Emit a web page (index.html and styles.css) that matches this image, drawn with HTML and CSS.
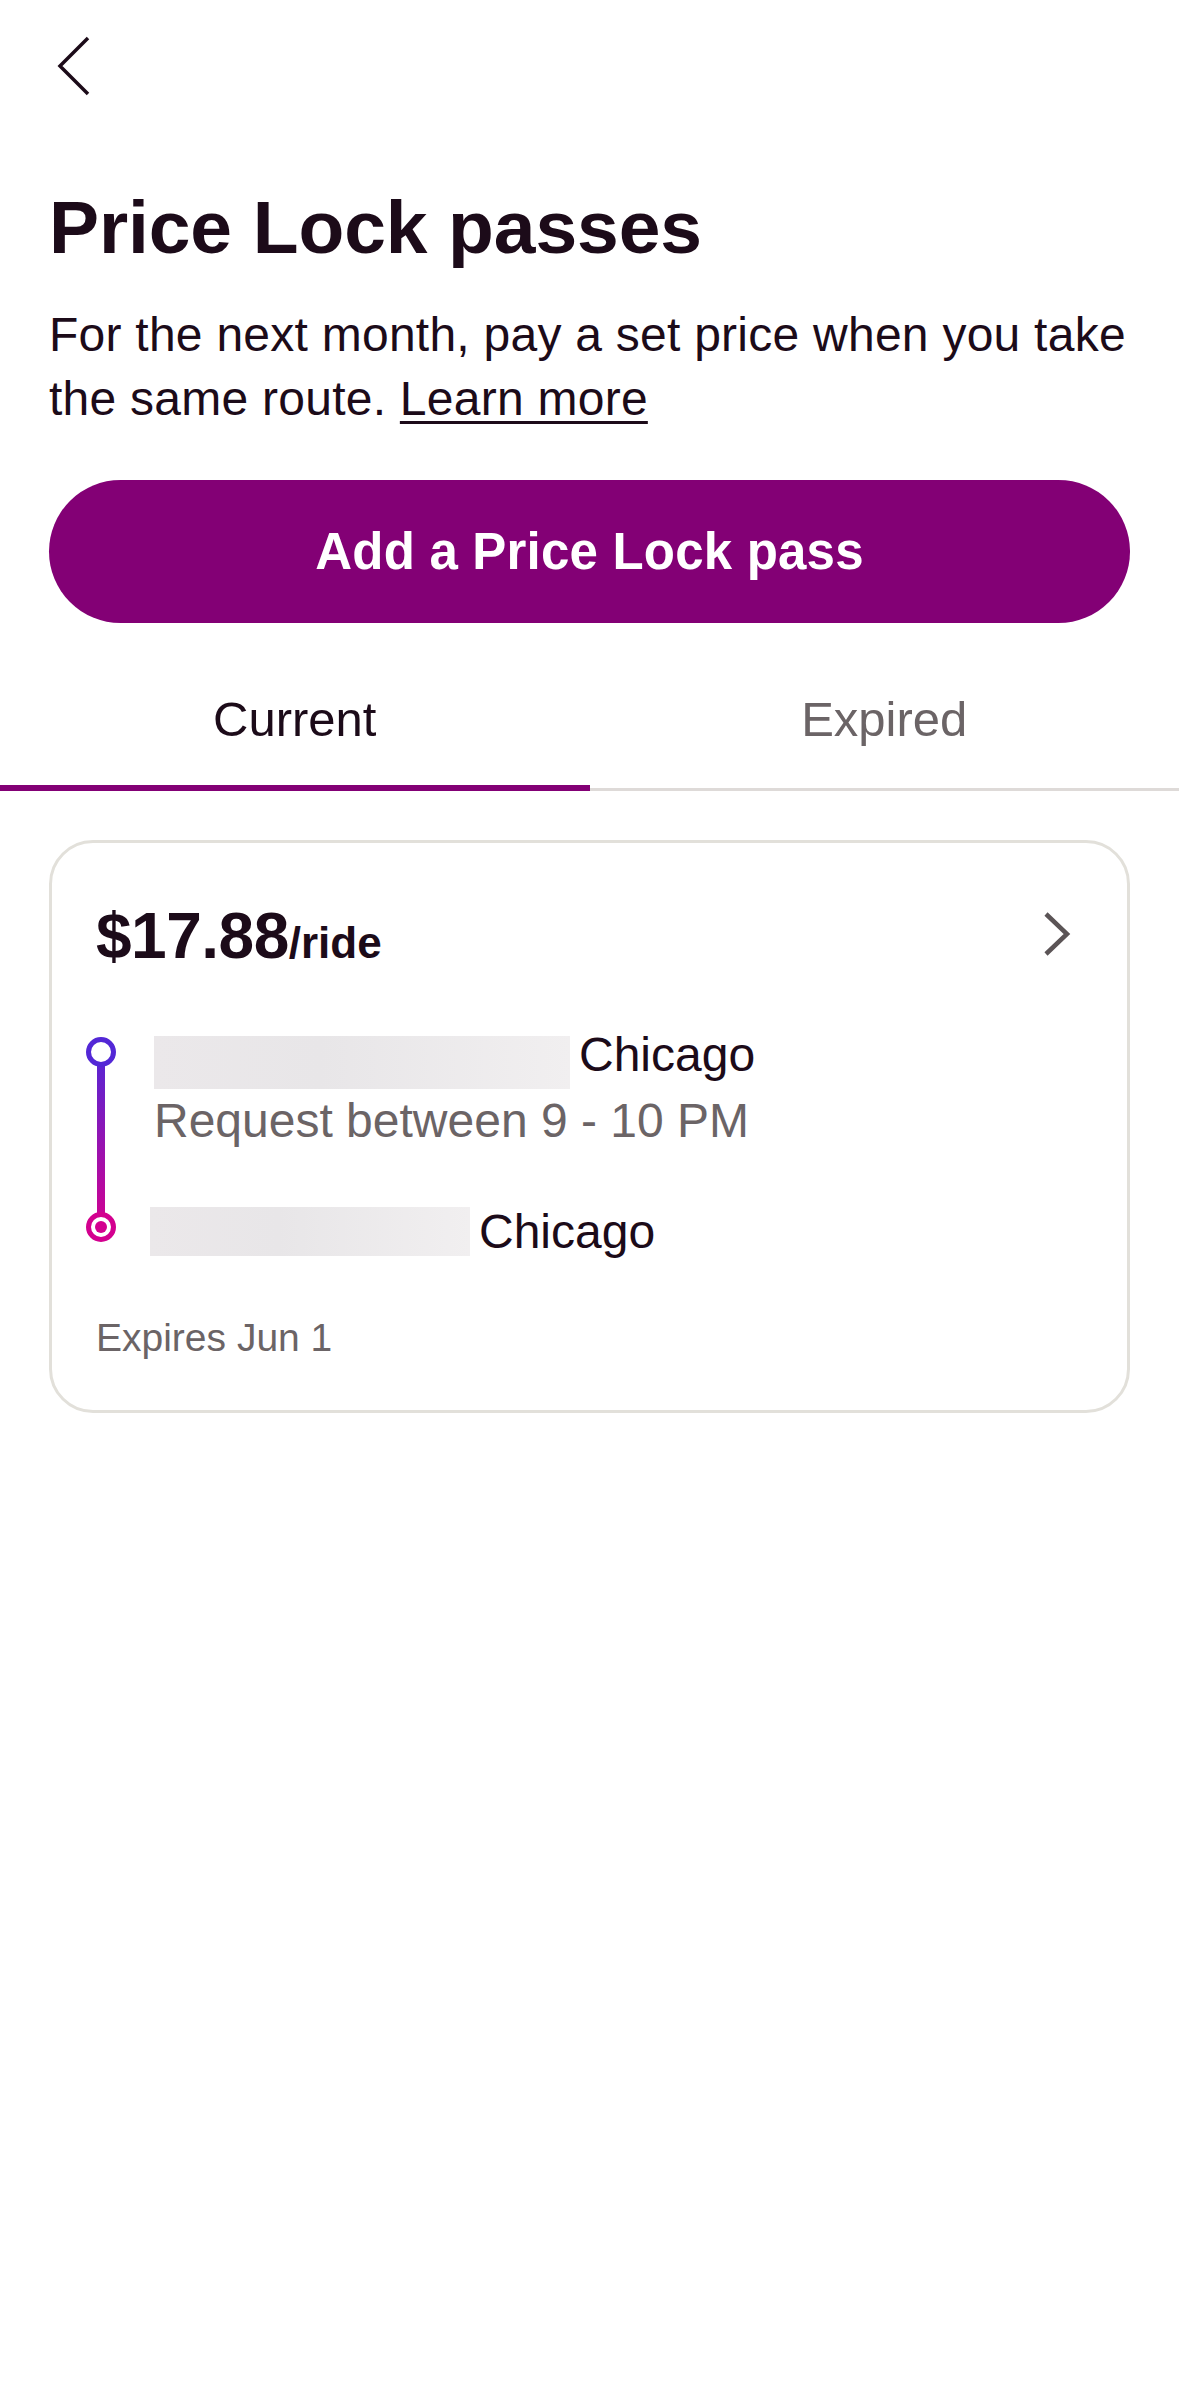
FILE: index.html
```html
<!DOCTYPE html>
<html lang="en">
<head>
  <meta charset="UTF-8">
  <title>Price Lock passes</title>
  <link rel="stylesheet" href="styles.css">
</head>
<body>
  <div class="top">
    <a class="back" href="#">
      <svg width="34" height="60" viewBox="0 0 34 60"><path d="M31 2 L3 30 L31 58" fill="none" stroke="#1c0b19" stroke-width="3.5" stroke-linejoin="miter"/></svg>
    </a>

    <h1>Price Lock passes</h1>
    <p class="intro"><span>For the next month, pay a set price when you take</span> <span>the same route.</span> <a href="#">Learn more</a></p>

    <button class="add-btn">Add a Price Lock pass</button>
  </div>

  <div class="tabs">
    <div class="tab active">Current</div>
    <div class="tab">Expired</div>
  </div>

  <div class="content">
    <div class="pass-card">
      <div class="price-row">
        <div class="price">$17.88<span class="per">/ride</span></div>
        <svg class="chev" width="30" height="46" viewBox="0 0 30 46"><path d="M4 3 L25 23 L4 43" fill="none" stroke="#5b5456" stroke-width="4.5"/></svg>
      </div>

      <div class="route">
        <svg class="route-line" width="40" height="216" viewBox="0 0 40 216">
          <defs>
            <linearGradient id="rg" x1="0" y1="21" x2="0" y2="196" gradientUnits="userSpaceOnUse">
              <stop offset="0" stop-color="#5327d6"/>
              <stop offset="1" stop-color="#d3008f"/>
            </linearGradient>
          </defs>
          <rect x="16" y="33" width="8" height="150" fill="url(#rg)"/>
          <circle cx="20" cy="21" r="12.5" fill="#fff" stroke="#5327d6" stroke-width="5"/>
          <circle cx="20" cy="196" r="12.5" fill="#fff" stroke="#d3008f" stroke-width="5"/>
          <circle cx="20" cy="196" r="6" fill="#d3008f"/>
        </svg>

        <div class="stops">
          <div class="stop first">
            <div class="redacted wide"></div>
            <span class="city">Chicago</span>
          </div>
          <div class="window">Request between 9 - 10 PM</div>
          <div class="stop last">
            <div class="redacted narrow"></div>
            <span class="city">Chicago</span>
          </div>
        </div>
      </div>

      <div class="expires">Expires Jun 1</div>
    </div>
  </div>
</body>
</html>
```

FILE: styles.css
```css
body {
  margin: 0;
  background: #fff;
  color: #1c0b19;
  font-family: 'Liberation Sans', Arial, sans-serif;
}
.top {
  padding: 0 49px;
}
.back {
  display: block;
  width: 34px;
  height: 60px;
  margin: 36px 0 0 8px;
}
.back svg {
  display: block;
}
h1 {
  margin: 88px 0 0;
  font-weight: bold;
  font-size: 75px;
  line-height: 86px;
  letter-spacing: -0.1px;
}
.intro {
  margin: 33px 0 0;
  font-size: 48px;
  line-height: 64px;
  letter-spacing: 0.25px;
}
.intro a {
  color: #1c0b19;
  text-decoration: underline;
  text-decoration-thickness: 3px;
  text-underline-offset: 6px;
}
.add-btn {
  display: block;
  width: 100%;
  height: 143px;
  margin-top: 49px;
  border: none;
  border-radius: 72px;
  background: #830075;
  color: #fff;
  font-family: 'Liberation Sans', Arial, sans-serif;
  font-weight: bold;
  font-size: 51px;
  letter-spacing: 0.2px;
  cursor: pointer;
}
.tabs {
  display: flex;
  align-items: flex-start;
  margin-top: 68px;
  border-bottom: 3px solid #dedad8;
}
.tab {
  flex: 1;
  text-align: center;
  font-size: 49px;
  line-height: 56px;
  padding-bottom: 41px;
  color: #6b6466;
}
.tab.active {
  color: #1c0b19;
  padding-bottom: 38px;
  border-bottom: 6px solid #830075;
  margin-bottom: -3px;
}
.content {
  padding: 49px 49px 0;
}
.pass-card {
  border: 3px solid #e2e0da;
  border-radius: 44px;
  padding: 61px 55px 48px 44px;
}
.price-row {
  display: flex;
  justify-content: space-between;
  align-items: center;
}
.price {
  font-weight: bold;
  font-size: 64px;
  line-height: 64px;
  letter-spacing: -0.5px;
}
.per {
  font-size: 44px;
  letter-spacing: 0;
}
.chev {
  display: block;
  margin-top: -12px;
}
.route {
  display: flex;
  align-items: flex-start;
  margin-top: 56px;
}
.route-line {
  display: block;
  flex: none;
  margin-left: -15px;
  margin-right: 33px;
}
.stops {
  display: flex;
  flex-direction: column;
}
.stop {
  display: flex;
  align-items: center;
  gap: 9px;
}
.redacted {
  background: linear-gradient(90deg, #ebe8ea, #e8e6e8 40%, #f1eff0);
}
.redacted.wide {
  width: 416px;
  height: 53px;
}
.redacted.narrow {
  width: 320px;
  height: 49px;
  margin-left: -4px;
}
.city {
  font-size: 48px;
  line-height: 48px;
}
.stop.first .city {
  margin-bottom: 14px;
}
.window {
  margin-top: 0;
  font-size: 48px;
  line-height: 56px;
  color: #6b6466;
}
.stop.last {
  margin-top: 58px;
}
.expires {
  margin-top: 58px;
  font-size: 39px;
  line-height: 48px;
  color: #6b6466;
}
```
